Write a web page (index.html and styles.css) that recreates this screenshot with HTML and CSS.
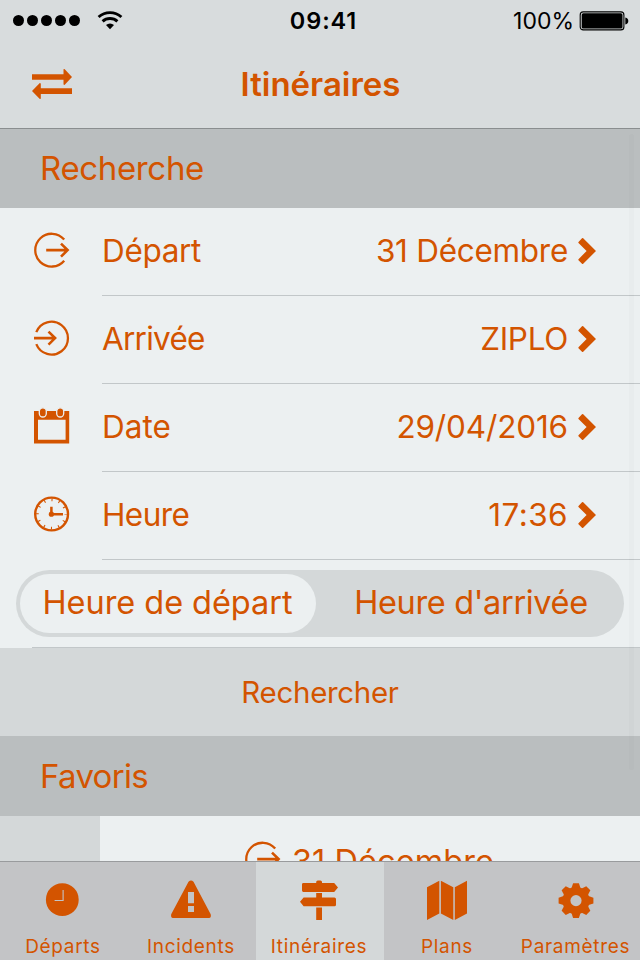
FILE: index.html
```html
<!DOCTYPE html>
<html lang="fr">
<head>
<meta charset="utf-8">
<title>Itinéraires</title>
<link rel="stylesheet" href="styles.css">
</head>
<body>
<svg class="defs" aria-hidden="true">
  <symbol id="out" viewBox="0 0 36 36"><g fill="none" stroke="currentColor" stroke-width="2.3"><path d="M30.2 7.6A16.4 16.4 0 1 0 30.2 28.7"/><path d="M12.2 18.1H33.6M27 11.6L33.6 18.1 27 24.7" stroke-width="2.6"/></g></symbol>
  <symbol id="in" viewBox="0 0 36 36"><g fill="none" stroke="currentColor" stroke-width="2.3"><path d="M2.3 12.1A16.4 16.4 0 1 1 2.3 24.2"/><path d="M0 18.1H21.1M14.5 11.6L21.1 18.1 14.5 24.7" stroke-width="2.6"/></g></symbol>
  <symbol id="chevron" viewBox="0 0 18 28"><path fill="currentColor" d="M.5 5L4 1.2Q4.6.7 5.2 1.2L18 14 5.2 26.8Q4.6 27.3 4 26.8L.5 23.2Q.1 22.7.5 22.2L8.6 14 .5 6Q.1 5.5.5 5Z"/></symbol>
</svg>
<div class="screen">
  <header class="top">
    <div class="status">
      <div class="signal">
        <i class="dot"></i><i class="dot"></i><i class="dot"></i><i class="dot"></i><i class="dot"></i>
        <svg class="wifi" viewBox="0 0 26 20"><g fill="none" stroke="#000" stroke-width="2.9"><path d="M1.6 6A17 17 0 0 1 24.4 6"/><path d="M5.6 10.4A11 11 0 0 1 20.4 10.4"/></g><path d="M13 18.2L9 14A5.9 5.9 0 0 1 17 14Z"/></svg>
      </div>
      <time class="clock">09:41</time>
      <div class="power"><span>100%</span>
        <svg class="battery" viewBox="0 0 50 20"><rect x="1.2" y=".9" width="43.7" height="18" rx="3" fill="none" stroke="#000" stroke-width="1.1"/><rect x="2.7" y="2.3" width="40.8" height="15.2" rx="1.6"/><path d="M46.3 6.4Q49.3 7 49.3 10T46.3 13.4Z"/></svg>
      </div>
    </div>
    <div class="nav">
      <svg class="swap" viewBox="0 0 40 30" fill="currentColor"><path d="M0 5.2H31.5V.2L32.5 0 40 8 32.5 16 31.5 15.6V10.8H0ZM40 19.2H8.8V14.4L7.8 14 0 22 7.8 30 8.8 29.8V24.9H40Z"/></svg>
      <h1 class="title">Itinéraires</h1>
    </div>
  </header>

  <main class="content">
    <h2 class="heading search-heading">Recherche</h2>
    <div class="row"><svg class="icon"><use href="#out"/></svg>
      <div class="cell"><span class="label depart">Départ</span><span class="value day">31 Décembre</span><svg class="chevron"><use href="#chevron"/></svg></div></div>
    <div class="row"><svg class="icon"><use href="#in"/></svg>
      <div class="cell"><span class="label arrivee">Arrivée</span><span class="value stop">ZIPLO</span><svg class="chevron"><use href="#chevron"/></svg></div></div>
    <div class="row"><svg class="icon" viewBox="0 0 36 36"><path fill="currentColor" fill-rule="evenodd" d="M0 3H35.2V35.6H0ZM4 11.7V31.7H31.6V11.7Z"/><g fill="currentColor" stroke="#ecf0f1" stroke-width="1.3"><rect x="5.3" y="-.2" width="7" height="9.2" rx="3.5"/><rect x="22.7" y="-.2" width="7" height="9.2" rx="3.5"/></g></svg>
      <div class="cell"><span class="label">Date</span><span class="value date">29/04/2016</span><svg class="chevron"><use href="#chevron"/></svg></div></div>
    <div class="row"><svg class="icon" viewBox="0 0 36 36"><g fill="none" stroke="currentColor"><circle cx="17.6" cy="18" r="16.4" stroke-width="2.4"/><circle cx="17.6" cy="18" r="14.2" stroke-width="2.7" stroke-dasharray="1.1 6.335" stroke-dashoffset=".55"/><path d="M17.4 10.7V18.2H29" stroke-width="2.5"/></g><circle cx="17.4" cy="18.2" r="2.6" fill="currentColor"/></svg>
      <div class="cell"><span class="label heure">Heure</span><span class="value time">17:36</span><svg class="chevron"><use href="#chevron"/></svg></div></div>
    <div class="mode">
      <div class="segments"><span class="segment selected">Heure de départ</span><span class="segment arrival">Heure d'arrivée</span></div>
      <hr class="rule">
    </div>
    <div class="submit">Rechercher</div>
    <h2 class="heading fav-heading">Favoris</h2>
    <div class="favorite">
      <div class="thumb"></div>
      <div class="trip"><svg class="icon"><use href="#out"/></svg><span class="value">31 Décembre</span></div>
    </div>
    <div class="scrollbar"></div>
  </main>

  <nav class="tabs">
    <div class="tab"><svg class="glyph" viewBox="0 0 44 44"><circle cx="21.3" cy="21.7" r="16.4" fill="currentColor"/><path d="M22.1 12V22.5H13.6" fill="none" stroke="#c3c4c6" stroke-width="1.1"/></svg><span>Départs</span></div>
    <div class="tab"><svg class="glyph" viewBox="0 0 44 44"><path fill="currentColor" fill-rule="evenodd" d="M19.5 3.8Q22 1 24.5 3.8L41.7 36.2Q42.5 39.8 40 40H4Q1.5 39.8 2.2 36.2ZM19 14V25.3H25V14ZM19 28V34H25V28Z"/></svg><span>Incidents</span></div>
    <div class="tab active"><svg class="glyph" viewBox="0 0 44 44"><path fill="currentColor" d="M19.2 5V4Q19.2 2.4 20.8 2.4H23.4Q25 2.4 25 4V5H37.2L41 9.6 37.2 14H6.4Q5 14 5 12.6V6.4Q5 5 6.4 5ZM19.2 15.1H25V19.4H37.4Q39 19.4 39 21V26.8Q39 28.3 37.4 28.3H6.6L3 23.8 6.6 19.4H19.2ZM19.2 29.6H25V42H19.2Z"/></svg><span>Itinéraires</span></div>
    <div class="tab"><svg class="glyph" viewBox="0 0 44 44"><path fill="currentColor" d="M2 9.2L14.3 2.7V35.4L2 42ZM15.9 2.7L28.3 9.2V42L15.9 35.4ZM29.8 9.2L42 2.7V35.4L29.8 42Z"/></svg><span>Plans</span></div>
    <div class="tab settings"><svg class="glyph" viewBox="-22 -22.6 44 44"><g fill="currentColor"><path id="tooth" d="M-5 -11L-2.9 -17.4H2.9L5 -11Z"/><use href="#tooth" transform="rotate(45)"/><use href="#tooth" transform="rotate(90)"/><use href="#tooth" transform="rotate(135)"/><use href="#tooth" transform="rotate(180)"/><use href="#tooth" transform="rotate(225)"/><use href="#tooth" transform="rotate(270)"/><use href="#tooth" transform="rotate(315)"/></g><circle r="9.6" fill="none" stroke="currentColor" stroke-width="8"/></svg><span>Paramètres</span></div>
  </nav>
</div>
</body>
</html>
```
FILE: styles.css
```css
* { box-sizing: border-box; }

body {
  margin: 0;
  font-family: Inter, "Liberation Sans", sans-serif;
  color: #d35400;
  background: #ecf0f1;
}

.defs { position: absolute; width: 0; height: 0; }
svg { display: block; flex: none; overflow: visible; }

.screen {
  display: flex;
  flex-direction: column;
  width: 640px;
  height: 960px;
  overflow: hidden;
}

/* Status and navigation bars */
.top {
  flex: none;
  height: 129px;
  background: #d8dcdd;
  border-bottom: 1px solid #8a8e8f;
}

.status {
  display: grid;
  grid-template-columns: 1fr auto 1fr;
  align-items: center;
  height: 41px;
  padding: 0 11px 0 13px;
  color: #000;
  font-size: 23px;
  line-height: 39px;
}
.status span { padding-top: 2px; }

.signal { display: flex; align-items: center; gap: 3px; }
.dot { width: 11px; height: 11px; border-radius: 50%; background: #000; }
.wifi { width: 26px; height: 20px; margin-left: 14px; }
.clock { font-size: 23.5px; font-weight: 600; letter-spacing: .9px; padding-left: 5px; }
.power { display: flex; justify-content: flex-end; align-items: center; gap: 5px; }
.battery { width: 50px; height: 20px; }

.nav {
  display: grid;
  grid-template-columns: 40px 1fr 40px;
  align-items: center;
  height: 87px;
  padding: 0 32px;
}

.swap { width: 40px; height: 30px; margin-bottom: 2px; }
.title {
  margin: 0;
  padding-left: 1px;
  text-align: center;
  font-size: 33px;
  font-weight: 600;
  line-height: 87px;
  letter-spacing: -.02px;
}

/* List */
.content { position: relative; flex: 1; min-height: 0; overflow: hidden; }

.heading {
  margin: 0;
  height: 80px;
  padding-left: 40px;
  background: #babebf;
  font-size: 33px;
  font-weight: 400;
  line-height: 80px;
}
.search-heading { height: 79px; line-height: 79px; letter-spacing: -.35px; }
.fav-heading { letter-spacing: -.67px; }

.row { display: flex; height: 88px; padding-left: 34px; }
.icon { width: 36px; height: 36px; margin: 24px 32px 0 0; }
.cell {
  flex: 1;
  display: flex;
  align-items: center;
  padding: 0 44px 2px 0;
  border-bottom: 1px solid #c2c7c9;
  font-size: 31.5px;
}
.value { margin-left: auto; }
.chevron { width: 18px; height: 28px; margin-left: 10px; }

.depart { letter-spacing: -.35px; }
.arrivee { letter-spacing: -.75px; }
.heure { letter-spacing: -.55px; }
.day { letter-spacing: -.28px; }
.stop { letter-spacing: -.33px; }
.date { letter-spacing: -.15px; }
.time { letter-spacing: .4px; }

.mode {
  display: flex;
  flex-direction: column;
  justify-content: space-between;
  height: 88px;
  padding: 10px 0 0 16px;
}
.segments {
  display: flex;
  width: 608px;
  height: 67px;
  padding: 4px;
  border-radius: 34px;
  background: #d4d8d9;
  font-size: 32.5px;
  line-height: 57px;
  text-align: center;
}
.segment { flex: 1; white-space: nowrap; }
.selected { flex: 0 0 296px; padding-right: 1px; border-radius: 30px; background: #ecf0f1; letter-spacing: -.05px; }
.arrival { letter-spacing: -.35px; padding-left: 6px; }
.rule { width: 608px; height: 1px; margin: 0 0 0 16px; border: 0; background: #c2c7c9; }

.submit {
  height: 88px;
  background: #d4d8d9;
  text-align: center;
  font-size: 29.5px;
  line-height: 88px;
  letter-spacing: -.32px;
}

.favorite { display: flex; height: 140px; }
.thumb { width: 100px; background: #d4d8d9; }
.trip { flex: 1; display: flex; padding-left: 145px; font-size: 32.5px; letter-spacing: .05px; line-height: 91px; }
.trip .icon { margin: 25px 11px 0 0; }
.trip .value { margin-left: 0; }

.scrollbar {
  position: absolute;
  top: 5px;
  right: 6px;
  width: 5px;
  height: 636px;
  border-radius: 3px;
  background: rgba(0, 0, 0, .014);
}

/* Tab bar */
.tabs {
  flex: none;
  display: grid;
  grid-template-columns: repeat(5, 1fr);
  height: 99px;
  border-top: 1px solid #999b9d;
  background: #c3c4c6;
}
.tab {
  display: flex;
  flex-direction: column;
  align-items: center;
  gap: 11px;
  padding: 16px 2px 0 0;
  font-size: 19px;
  line-height: 28px;
  letter-spacing: .68px;
  white-space: nowrap;
}
.active { background: #d4d8d9; }
.settings { padding-right: 1px; }
.glyph { width: 44px; height: 44px; }
```
